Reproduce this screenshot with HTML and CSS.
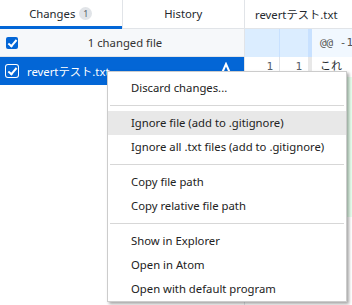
FILE: index.html
```html
<!DOCTYPE html>
<html lang="ja">
<head>
    <meta charset="UTF-8">
    <meta name="viewport" content="width=device-width, initial-scale=1.0">
    <title>Changes</title>
    <link rel="stylesheet" href="styles.css">
</head>
<body>
    <div class="app">
        <div class="sidebar">
            <div class="tabs">
                <div class="tab active">Changes <span class="badge">1</span></div>
                <div class="tab">History</div>
            </div>
            <div class="list-header">
                <span class="checkbox"></span>
                <span class="list-title">1 changed file</span>
            </div>
            <div class="file-row selected">
                <span class="checkbox light"></span>
                <span class="file-name">revertテスト.txt</span>
                <svg class="status-icon" width="10" height="10" viewBox="0 0 10 10">
                    <path d="M1.5 10 L5 2 L8.5 10" fill="none" stroke="#fff" stroke-width="2"/>
                </svg>
            </div>
        </div>

        <div class="diff">
            <div class="diff-header">revertテスト.txt</div>
            <div class="diff-line hunk">
                <span class="gutter"></span>
                <span class="gutter"></span>
                <span class="code">@@ -1</span>
            </div>
            <div class="diff-line">
                <span class="gutter">1</span>
                <span class="gutter">1</span>
                <span class="code">これ</span>
            </div>
            <div class="diff-line added"><span class="gutter"></span><span class="gutter"></span><span class="code"></span></div>
            <div class="diff-line added"><span class="gutter"></span><span class="gutter"></span><span class="code"></span></div>
            <div class="diff-line added"><span class="gutter"></span><span class="gutter"></span><span class="code"></span></div>
            <div class="diff-line added"><span class="gutter"></span><span class="gutter"></span><span class="code"></span></div>
            <div class="diff-line added"><span class="gutter"></span><span class="gutter"></span><span class="code"></span></div>
            <div class="diff-line added"><span class="gutter"></span><span class="gutter"></span><span class="code"></span></div>
            <div class="diff-line added"><span class="gutter"></span><span class="gutter"></span><span class="code"></span></div>
        </div>
    </div>

    <!-- コンテキストメニュー -->
    <div class="menu">
        <div class="menu-item">Discard changes...</div>
        <div class="menu-sep"></div>
        <div class="menu-item hover">Ignore file (add to .gitignore)</div>
        <div class="menu-item">Ignore all .txt files (add to .gitignore)</div>
        <div class="menu-sep"></div>
        <div class="menu-item">Copy file path</div>
        <div class="menu-item">Copy relative file path</div>
        <div class="menu-sep"></div>
        <div class="menu-item">Show in Explorer</div>
        <div class="menu-item">Open in Atom</div>
        <div class="menu-item">Open with default program</div>
    </div>
</body>
</html>
```

FILE: styles.css
```css
:root {
    --blue: #0366d6;
    --border: #e1e4e8;
    --text: #24292e;
    --gutter-blue: #dbedff;
    --hunk-blue: #f1f8ff;
}

* {
    margin: 0;
    padding: 0;
    box-sizing: border-box;
}

body {
    width: 352px;
    height: 305px;
    overflow: hidden;
    background: #fff;
    color: var(--text);
    font-family: "Noto Sans", "Noto Sans CJK JP", sans-serif;
    font-size: 11.3px;
    position: relative;
}

.app {
    display: flex;
    height: 100%;
}

.sidebar {
    width: 245px;
    flex-shrink: 0;
    border-right: 1px solid var(--border);
}

.tabs {
    display: flex;
    height: 29px;
    border-bottom: 1px solid var(--border);
}

.tab {
    flex: 1;
    display: flex;
    align-items: center;
    justify-content: center;
    gap: 4px;
    padding-bottom: 1px;
}

.tab + .tab {
    border-left: 1px solid var(--border);
}

.tab.active {
    border-bottom: 3px solid var(--blue);
    padding-bottom: 0;
    margin-bottom: -1px;
}

.badge {
    display: inline-flex;
    align-items: center;
    justify-content: center;
    width: 13px;
    height: 13px;
    border-radius: 50%;
    background: #e1e4e8;
    font-size: 9px;
    color: #586069;
}

.list-header,
.file-row {
    display: flex;
    align-items: center;
    height: 28px;
    padding-left: 6px;
}

.list-header {
    background: #f6f8fa;
    border-bottom: 1px solid var(--border);
}

.list-title {
    flex: 1;
    text-align: center;
    padding-right: 12px;
    color: #333;
}

.checkbox {
    width: 12px;
    height: 12px;
    border-radius: 2px;
    background: var(--blue);
    position: relative;
    flex-shrink: 0;
}

.checkbox::after {
    content: '';
    position: absolute;
    left: 4px;
    top: 1px;
    width: 3px;
    height: 7px;
    border: solid #fff;
    border-width: 0 2px 2px 0;
    transform: rotate(40deg);
}

.checkbox.light {
    box-shadow: 0 0 0 1px #fff;
}

.file-row.selected {
    background: var(--blue);
    color: #fff;
}

.file-name {
    flex: 1;
    margin-left: 9px;
}

.status-icon {
    align-self: flex-start;
    margin-top: 5px;
    margin-right: 13px;
}

.diff {
    flex: 1;
    overflow: hidden;
}

.diff-header {
    height: 29px;
    display: flex;
    align-items: center;
    padding-left: 10px;
    white-space: nowrap;
    border-bottom: 1px solid var(--border);
}

.diff-line {
    display: grid;
    grid-template-columns: 35px 32px 1fr;
    height: 20px;
    font-family: "DejaVu Sans Mono", "Noto Sans CJK JP", monospace;
    font-size: 11px;
    white-space: nowrap;
}

.diff-line.hunk {
    height: 28px;
    background: var(--hunk-blue);
}

.gutter {
    text-align: right;
    padding-right: 6px;
    border-right: 1px solid var(--border);
    color: #586069;
    line-height: 20px;
}

.gutter:nth-child(2) {
    border-right: 4px solid #e8e8e8;
}

.hunk .gutter {
    background: var(--gutter-blue);
    border-right-color: #c8e1ff;
}

.code {
    padding-left: 8px;
    line-height: 20px;
    overflow: hidden;
}

.hunk .code {
    line-height: 28px;
    color: #555;
}

.diff-line.added {
    background: #e6ffed;
}

.added .gutter {
    background: #cdffd8;
}

.menu {
    position: absolute;
    left: 107px;
    top: 71px;
    width: 240px;
    background: #fff;
    border: 1px solid #ccc;
    box-shadow: 2px 2px 3px rgba(0, 0, 0, 0.35);
    padding: 4px 0 0;
    color: #222;
}

.menu-item {
    height: 24px;
    line-height: 24px;
    padding-left: 23px;
    white-space: nowrap;
}

.menu-item.hover {
    background: #e8e8e8;
}

.menu-sep {
    height: 1px;
    margin: 5px 2px;
    background: #d7d7d7;
}
```
